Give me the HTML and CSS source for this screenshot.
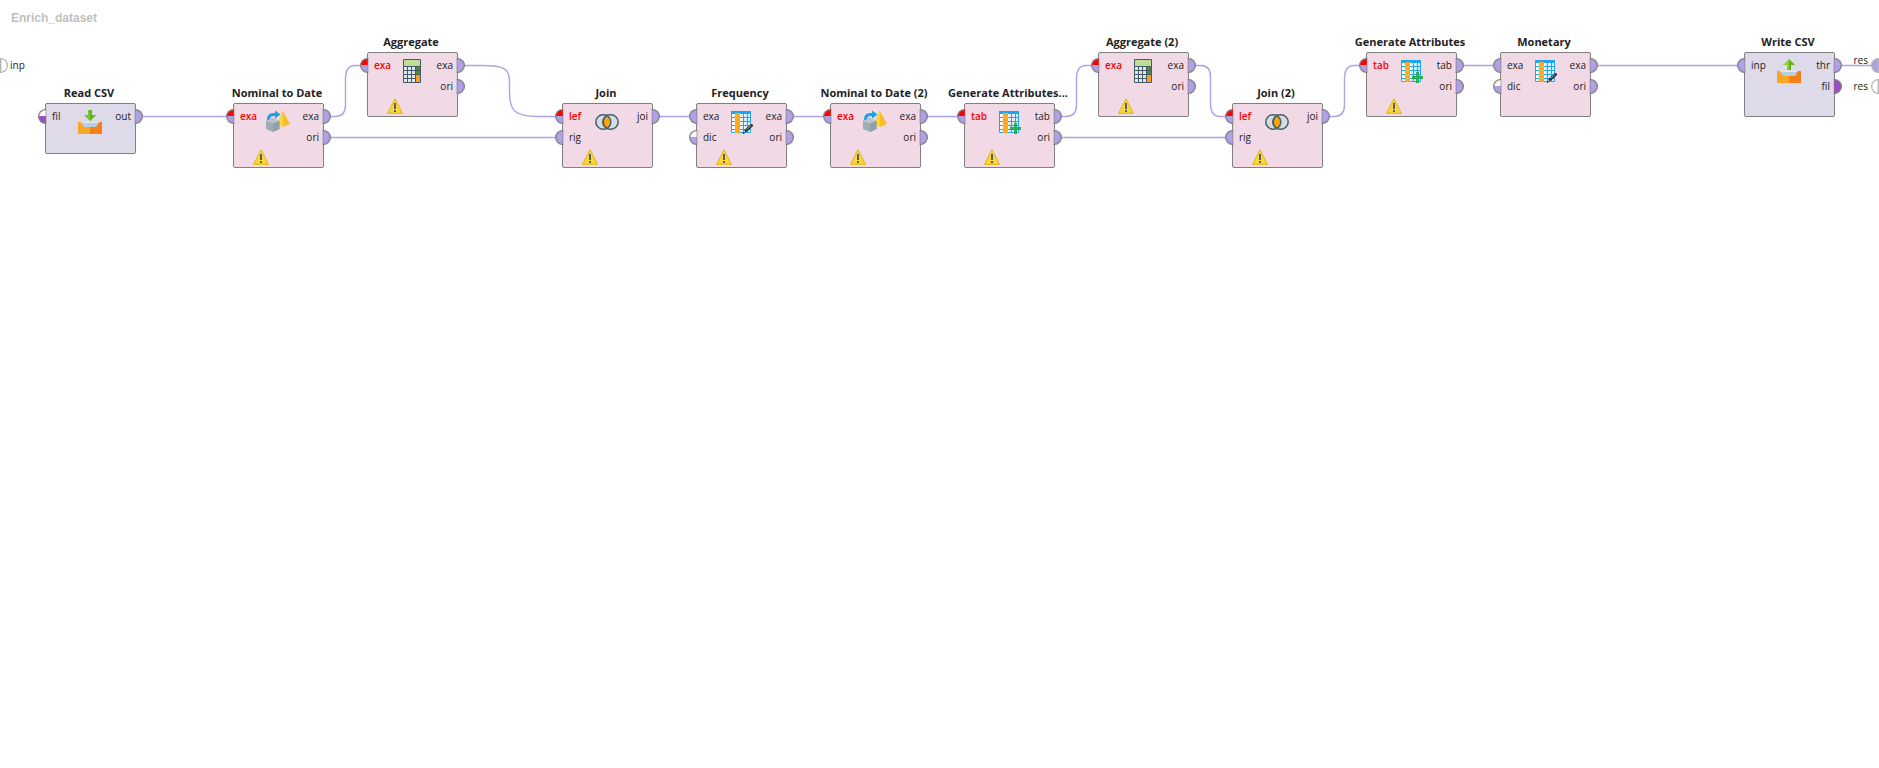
FILE: index.html
```html
<!DOCTYPE html>
<html lang="en">
<head>
<meta charset="utf-8">
<title>Enrich_dataset</title>
<link rel="stylesheet" href="styles.css">
</head>
<body>
<svg class="defs" aria-hidden="true">
  <symbol id="i-tray" viewBox="0 0 24 12">
    <path d="M0 0H4V1H20V0H24V12H0Z" fill="#f9a526"/>
    <path d="M12 1H20V0H24V12H12Z" fill="#f58019"/>
    <path d="M3 0H21L18 5H6Z" fill="#dfe9ef"/>
    <path d="M4 2H20M5 4H19" stroke="#8eb4cc" stroke-width="1"/>
  </symbol>
  <symbol id="i-read" viewBox="0 0 24 24">
    <path d="M10 0H14V5H18L12 11L6 5H10Z" fill="#76c628"/>
    <path d="M12 0H14V5H18L12 11Z" fill="#5db41c"/>
    <use href="#i-tray" y="12" width="24" height="12"/>
  </symbol>
  <symbol id="i-write" viewBox="0 0 24 24">
    <path d="M10 11H14V6H18L12 0L6 6H10Z" fill="#86d22e"/>
    <path d="M12 11H14V6H18L12 0Z" fill="#5db41c"/>
    <use href="#i-tray" y="12" width="24" height="12"/>
  </symbol>
  <symbol id="i-convert" viewBox="0 0 24 24">
    <path d="M16.500 0L11 15L17 17Z" fill="#fdd835"/>
    <path d="M16.500 0L24 14L17 17Z" fill="#f8bd2c"/>
    <path d="M2.500 10C2.500 5 5 4 10 4.500" fill="none" stroke="#1b9fe8" stroke-width="3"/>
    <path d="M9 0.500L14.500 4.500L9 8.500Z" fill="#1ba1e8"/>
    <path d="M0 11L7 8L13.500 11V19L7 22L0 19Z" fill="#9fadb5"/>
    <path d="M0 11L7 8L13.500 11L7 13.500Z" fill="#b7c4ca"/>
    <path d="M7 13.500L13.500 11V19L7 22Z" fill="#8fa0a8"/>
  </symbol>
  <symbol id="i-calc" viewBox="0 0 24 24">
    <rect x="3" y="0" width="18" height="24" rx="1" fill="#455a64"/>
    <rect x="4" y="1" width="16" height="6" fill="#c0dc96"/>
    <path d="M4 8h3v3h-3zM8 8h3v3h-3zM12 8h3v3h-3zM4 12h3v3h-3zM8 12h3v3h-3zM12 12h3v3h-3zM4 16h3v3h-3zM8 16h3v3h-3zM12 16h3v3h-3zM4 20h3v3h-3zM8 20h3v3h-3zM12 20h3v3h-3z" fill="#dfe7ea"/>
    <path d="M16 8h4v3h-4zM16 12h4v3h-4z" fill="#4c8c2b"/>
    <rect x="16" y="16" width="4" height="7" fill="#fb9d1b"/>
  </symbol>
  <symbol id="i-join" viewBox="0 0 24 24">
    <rect x="0.800" y="4.800" width="15.400" height="14.400" rx="7.200" fill="#d3dde0" stroke="#455f6b" stroke-width="1.500"/>
    <rect x="7.800" y="4.800" width="15.400" height="14.400" rx="7.200" fill="#d3dde0" stroke="#455f6b" stroke-width="1.500"/>
    <path d="M12 5.600C17 9 17 15 12 18.400C7 15 7 9 12 5.600Z" fill="#ffa30a" stroke="#455f6b" stroke-width="1.500"/>
  </symbol>
  <symbol id="i-table" viewBox="0 0 24 24">
    <rect x="2" y="2" width="20" height="21" fill="#fff"/>
    <path d="M12 4H22V23H12Z" fill="#d9f1fd"/>
    <path d="M2 7.500H22M2 11.500H22M2 15.500H22M2 19.500H22M14.500 3V23M18.500 3V23" stroke="#1ea6ee" stroke-width="1"/>
    <path d="M2.500 3V22.500H21.500V3" fill="none" stroke="#1ea6ee" stroke-width="1"/>
    <rect x="2" y="1" width="20" height="3" fill="#1ea6ee"/>
    <rect x="6" y="3" width="5" height="20" fill="#ffa61a"/>
    <path d="M6 7.500H11M6 11.500H11M6 15.500H11M6 19.500H11" stroke="#ffbd35"/>
  </symbol>
  <symbol id="i-edit" viewBox="0 0 24 24">
    <use href="#i-table" width="24" height="24"/>
    <path d="M17 20.500L22.500 15.500" stroke="#2b2b2b" stroke-width="3" stroke-linecap="round"/>
    <path d="M17.500 19.500L22 15.500" stroke="#9a9a9a" stroke-width="1"/>
    <path d="M14 23.500L15.500 22.500" stroke="#2b2b2b" stroke-width="1.500"/>
  </symbol>
  <symbol id="i-add" viewBox="0 0 24 24">
    <use href="#i-table" width="24" height="24"/>
    <path d="M17 13H20V17H24V20H20V24H17V20H13V17H17Z" fill="#27ae60"/>
  </symbol>
  <symbol id="i-warn" viewBox="0 0 16 16">
    <path d="M8 1L15.300 15.300H0.700Z" fill="#fdd835" stroke="#e5c02c" stroke-width="1.400" stroke-linejoin="round"/>
    <path d="M7 5H9V11H7ZM7 12H9V14H7Z" fill="#546069"/>
  </symbol>
</svg>

<main class="canvas">
  <h1 class="process">Enrich_dataset</h1>

  <svg class="wires" aria-hidden="true">
    <path d="M143 116.500H227M331 137.500H556M660 116.500H690M794 116.500H824M928 116.500H958M1062 137.500H1226M1464 65.500H1494M1598 65.500H1738"/>
    <path d="M331 116.500H335Q345.500 116.500 345.500 105V79Q345.500 65.500 355 65.500H361"/>
    <path d="M465 65.500H482C505 65.500 509.500 69 509.500 82V92C509.500 110 514 116.500 538 116.500H556"/>
    <path d="M1062 116.500H1066Q1076.500 116.500 1076.500 105V79Q1076.500 65.500 1086 65.500H1092"/>
    <path d="M1196 65.500H1201Q1210.500 65.500 1210.500 77V103Q1210.500 116.500 1220 116.500H1226"/>
    <path d="M1330 116.500H1334Q1344.500 116.500 1344.500 105V79Q1344.500 65.500 1354 65.500H1360"/>
    <line x1="1842" y1="65.500" x2="100%" y2="65.500"/>
  </svg>

  <div class="edge source"><span class="port out open"></span>inp</div>
  <div class="edge result linked">res<span class="port in"></span></div>
  <div class="edge result second">res<span class="port in open"></span></div>

  <section class="node read"><h2>Read CSV</h2><div class="box io">
    <ul><li>fil<i class="port in file-opt"></i></li></ul><svg class="icon"><use href="#i-read"/></svg><ul class="outs"><li>out<i class="port out"></i></li></ul></div></section>

  <section class="node date1"><h2>Nominal to Date</h2><div class="box">
    <ul><li class="bad">exa<i class="port in"></i></li></ul><svg class="icon"><use href="#i-convert"/></svg><ul class="outs"><li>exa<i class="port out"></i></li><li>ori<i class="port out"></i></li></ul><svg class="warn"><use href="#i-warn"/></svg></div></section>

  <section class="node agg1"><h2>Aggregate</h2><div class="box">
    <ul><li class="bad">exa<i class="port in"></i></li></ul><svg class="icon"><use href="#i-calc"/></svg><ul class="outs"><li>exa<i class="port out"></i></li><li>ori<i class="port out"></i></li></ul><svg class="warn"><use href="#i-warn"/></svg></div></section>

  <section class="node join1"><h2>Join</h2><div class="box">
    <ul><li class="bad">lef<i class="port in"></i></li><li>rig<i class="port in"></i></li></ul><svg class="icon"><use href="#i-join"/></svg><ul class="outs"><li>joi<i class="port out"></i></li></ul><svg class="warn"><use href="#i-warn"/></svg></div></section>

  <section class="node freq"><h2>Frequency</h2><div class="box">
    <ul><li>exa<i class="port in"></i></li><li>dic<i class="port in opt"></i></li></ul><svg class="icon"><use href="#i-edit"/></svg><ul class="outs"><li>exa<i class="port out"></i></li><li>ori<i class="port out"></i></li></ul><svg class="warn"><use href="#i-warn"/></svg></div></section>

  <section class="node date2"><h2>Nominal to Date (2)</h2><div class="box">
    <ul><li class="bad">exa<i class="port in"></i></li></ul><svg class="icon"><use href="#i-convert"/></svg><ul class="outs"><li>exa<i class="port out"></i></li><li>ori<i class="port out"></i></li></ul><svg class="warn"><use href="#i-warn"/></svg></div></section>

  <section class="node gen1"><h2>Generate Attributes...</h2><div class="box">
    <ul><li class="bad">tab<i class="port in"></i></li></ul><svg class="icon"><use href="#i-add"/></svg><ul class="outs"><li>tab<i class="port out"></i></li><li>ori<i class="port out"></i></li></ul><svg class="warn"><use href="#i-warn"/></svg></div></section>

  <section class="node agg2"><h2>Aggregate (2)</h2><div class="box">
    <ul><li class="bad">exa<i class="port in"></i></li></ul><svg class="icon"><use href="#i-calc"/></svg><ul class="outs"><li>exa<i class="port out"></i></li><li>ori<i class="port out"></i></li></ul><svg class="warn"><use href="#i-warn"/></svg></div></section>

  <section class="node join2"><h2>Join (2)</h2><div class="box">
    <ul><li class="bad">lef<i class="port in"></i></li><li>rig<i class="port in"></i></li></ul><svg class="icon"><use href="#i-join"/></svg><ul class="outs"><li>joi<i class="port out"></i></li></ul><svg class="warn"><use href="#i-warn"/></svg></div></section>

  <section class="node gen2"><h2>Generate Attributes</h2><div class="box">
    <ul><li class="bad">tab<i class="port in"></i></li></ul><svg class="icon"><use href="#i-add"/></svg><ul class="outs"><li>tab<i class="port out"></i></li><li>ori<i class="port out"></i></li></ul><svg class="warn"><use href="#i-warn"/></svg></div></section>

  <section class="node money"><h2>Monetary</h2><div class="box tall">
    <ul><li>exa<i class="port in"></i></li><li>dic<i class="port in opt"></i></li></ul><svg class="icon"><use href="#i-edit"/></svg><ul class="outs"><li>exa<i class="port out"></i></li><li>ori<i class="port out"></i></li></ul></div></section>

  <section class="node write"><h2>Write CSV</h2><div class="box io tall">
    <ul><li>inp<i class="port in"></i></li></ul><svg class="icon"><use href="#i-write"/></svg><ul class="outs"><li>thr<i class="port out"></i></li><li>fil<i class="port out file"></i></li></ul></div></section>
</main>
</body>
</html>
```
FILE: styles.css
```css
* { box-sizing: border-box; }

body {
  margin: 0;
  background: #fff;
  color: #222;
  font: 10px/20px "Open Sans", "Noto Sans", sans-serif;
}

.defs { position: absolute; width: 0; height: 0; }

.canvas {
  position: relative;
  min-height: 100vh;
  overflow: hidden;
}

.process {
  margin: 0;
  padding: 8px 11px;
  color: #bfbfbf;
  font: bold 12px/20px "Liberation Sans", Arial, sans-serif;
}

.wires {
  position: absolute;
  top: 0;
  left: 0;
  width: 100%;
  height: 100%;
  fill: none;
  stroke: #b0a0e6;
  stroke-width: 1.4;
}

/* Operators placed on the process canvas */
.node { position: absolute; width: 91px; }
.node h2 {
  display: flex;
  justify-content: center;
  margin: 0 2px 0 -1px;
  font-size: 11px;
  line-height: 20px;
  white-space: nowrap;
}

.read, .date1, .join1, .freq, .date2, .gen1, .join2 { top: 83px; }
.agg1, .agg2, .gen2, .money, .write { top: 32px; }
.read { left: 45px; }
.date1 { left: 233px; }
.agg1 { left: 367px; }
.join1 { left: 562px; }
.freq { left: 696px; }
.date2 { left: 830px; }
.gen1 { left: 964px; }
.agg2 { left: 1098px; }
.join2 { left: 1232px; }
.gen2 { left: 1366px; }
.money { left: 1500px; }
.write { left: 1744px; }

.box {
  display: grid;
  grid-template-columns: 32px 24px 1fr;
  align-content: start;
  min-height: 51px;
  padding: 2px 0;
  border: 1px solid #808080;
  border-radius: 2px;
  background: #f1d9e6;
}
.box.io { background: #dedaea; }
.box.tall { min-height: 65px; }

ul { margin: 0; padding: 0; list-style: none; }
li {
  position: relative;
  height: 21px;
  padding-left: 6px;
}
.outs li { padding: 0 4px 0 0; text-align: right; }
.bad { color: #f00; font-weight: 600; }

.icon { width: 24px; height: 24px; margin-top: 4px; }
.warn { grid-column: 1 / -1; width: 16px; height: 16px; margin: 1px 0 0 19px; }

/* Half-round connection ports */
.port {
  width: 9px;
  height: 15px;
  border: 1px solid #808080;
  box-shadow: inset 0 0 0 1px rgba(128, 128, 128, 0.4);
  background: #b0a0e6;
}
.port.in { border-right-color: #c4c0cc; border-radius: 8px 0 0 8px; }
.port.out { border-left-color: #c4c0cc; border-radius: 0 8px 8px 0; }
.box .port { position: absolute; top: 3px; }
.box .port.in { left: -8px; }
.box .port.out { right: -8px; }
.bad .port { background: linear-gradient(#f00 50%, #b0a0e6 50%); }
.port.opt { background: linear-gradient(#fff 50%, #b0a0e6 50%); }
.port.file-opt { background: linear-gradient(#fff 50%, #9c4cc4 50%); }
.port.file { background: #9c4cc4; }

/* Process-level ports on the canvas edges */
.edge { position: absolute; display: flex; align-items: center; }
.edge .port {
  width: 8px;
  border-color: #b4b4b4;
  box-shadow: inset 0 0 0 1px rgba(180, 180, 180, 0.4);
}
.edge .open { background: #fff; }
.source { top: 55px; left: 0; gap: 2px; }
.result { right: 0; gap: 3px; align-items: flex-start; }
.linked { top: 50px; }
.linked .port { margin-top: 8px; }
.second { top: 76px; }
.second .port { margin-top: 3px; }
```
